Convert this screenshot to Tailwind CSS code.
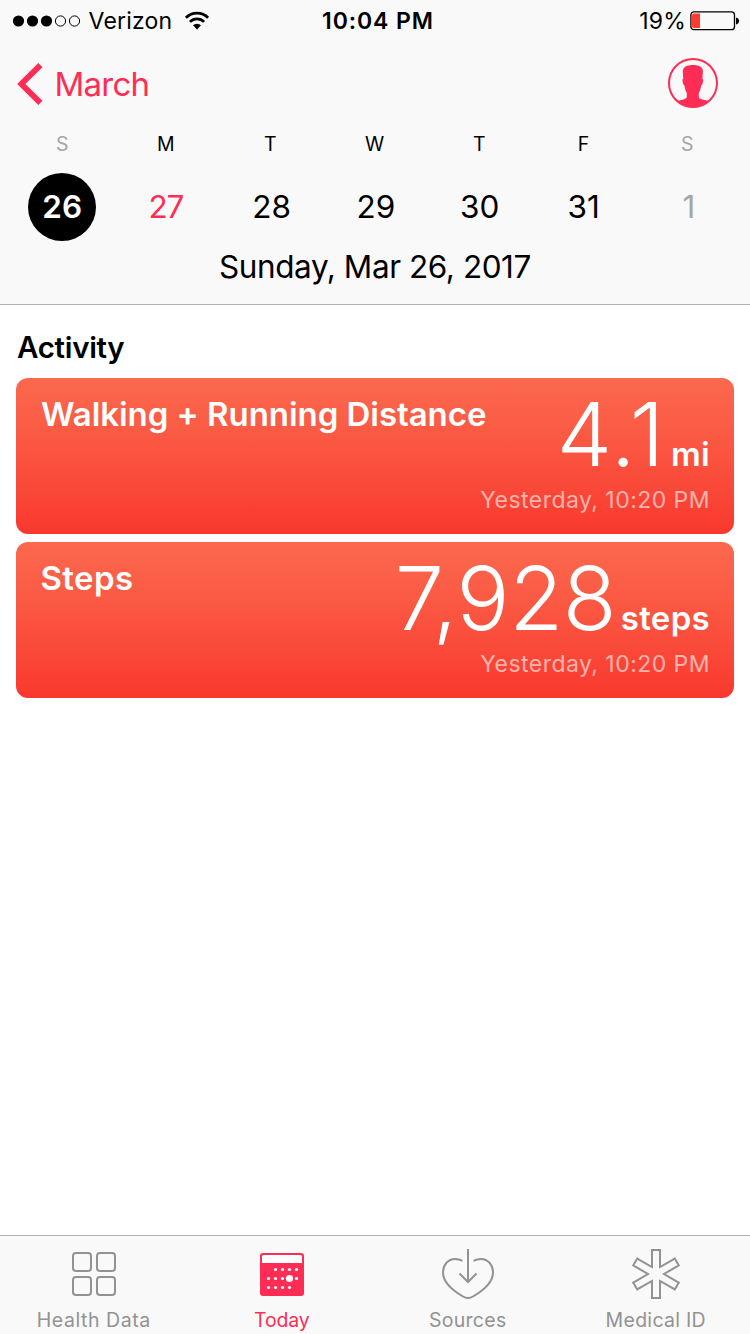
<!DOCTYPE html>
<html lang="en">
<head>
<meta charset="utf-8">
<title>Health</title>
<script src="https://cdn.jsdelivr.net/npm/@tailwindcss/browser@4"></script>
</head>
<body class="w-[750px] h-[1334px] overflow-hidden bg-white text-black font-['Inter','Liberation_Sans',sans-serif] flex flex-col whitespace-nowrap">

<header class="h-[305px] shrink-0 bg-[#f9f9f9] border-b border-[#b2b2b2]">
  <!-- Status bar -->
  <div class="grid grid-cols-3 h-[41px] items-center text-[23px] leading-[41px]">
    <div class="flex items-center pl-[12px]">
      <svg class="w-[70px] h-[14px]" viewBox="0 0 70 14">
        <circle cx="6.5" cy="7" r="5.6"/><circle cx="20.5" cy="7" r="5.6"/><circle cx="34.5" cy="7" r="5.6"/>
        <circle cx="48.5" cy="7" r="5.1" fill="none" stroke="#000" stroke-width="1"/><circle cx="62.5" cy="7" r="5.1" fill="none" stroke="#000" stroke-width="1"/>
      </svg>
      <span class="ml-[6.5px] pt-[2px] leading-[39px] tracking-[0.2px]">Verizon</span>
      <svg class="ml-[11.5px] w-[26px] h-[20px] shrink-0" viewBox="0 0 26 20" fill="none" stroke="#000" stroke-width="2.7">
        <path d="M1.9 6.700a15.6 15.6 0 0 1 22.2 0"/>
        <path d="M5.9 10.900a10 10 0 0 1 14.2 0"/>
        <path d="M13 18.4l-4-4.1a5.8 5.8 0 0 1 8 0z" fill="#000" stroke="none"/>
      </svg>
    </div>
    <div class="text-center font-[590] tracking-[0.9px] pl-[6px] pt-[2px] leading-[39px]">10:04 PM</div>
    <div class="flex items-center justify-end pr-[10px]">
      <span class="tracking-[0.2px] mr-[4px] pt-[2px] leading-[39px]">19%</span>
      <svg class="w-[50px] h-[20px]" viewBox="0 0 50 20">
        <rect x="0.9" y="0.9" width="43.6" height="17.8" rx="3" fill="none" stroke="#000" stroke-width="1.3"/>
        <path d="M4 2.5h6v14.5H4a2 2 0 0 1-2-2V4.500a2 2 0 0 1 2-2z" fill="#ff3b30"/>
        <path d="M46 6.500q3 .6 3 3.500t-3 3.500z"/>
      </svg>
    </div>
  </div>

  <!-- Navigation -->
  <div class="flex justify-between items-center h-[86px] pl-[15.500px] pr-[31px]">
    <div class="flex items-center text-[#ff2d55]">
      <svg class="w-[28px] h-[44px]" viewBox="0 0 28 44" fill="none" stroke="currentColor" stroke-width="5.800"><path d="M24.400 3.100L5.300 22l19.100 18.900"/></svg>
      <span class="ml-[11px] text-[33px] leading-[40px] tracking-[-0.77px]">March</span>
    </div>
    <svg class="w-[52px] h-[52px] -mt-[2px]" viewBox="0 0 52 52">
      <clipPath id="ring"><circle cx="26" cy="26" r="24.500"/></clipPath>
      <path clip-path="url(#ring)" fill="#ff2d55" d="M26 8c-6.200 0-10.200 2-10.200 6.500l.4 7.500c-.9 0-.9 1.500-.4 3.500.4 1.800.8 2.700 1.600 2.900.5 3.200 1.200 5.600 2.400 7.600v4c0 1.500-2.500 2.400-5.700 2.900C12 43.300 9 44 5 47v6h42v-6c-4-3-7-3.700-9.500-4.100-3.200-.5-5.700-1.400-5.700-2.900v-4c1.200-2 1.900-4.400 2.400-7.600.8-.2 1.200-1.100 1.600-2.900.5-2 .5-3.500-.4-3.500l.5-7.500C36.200 10.200 32 8 26 8z"/>
      <circle cx="26" cy="26" r="24" fill="none" stroke="#ff2d55" stroke-width="2"/>
    </svg>
  </div>

  <!-- Week -->
  <div class="grid grid-cols-7 px-[10px] text-center text-[19.500px] leading-[34px]">
    <div class="text-[#a5a5a5]">S</div><div class="pr-px">M</div><div class="pr-px">T</div><div class="pr-px">W</div><div>T</div><div>F</div><div class="text-[#a5a5a5] pr-px">S</div>
  </div>
  <div class="grid grid-cols-7 px-[10px] mt-[12px] text-center text-[31.500px] leading-[68px]">
    <div class="size-[68px] justify-self-center rounded-full bg-black text-white font-[590]">26</div>
    <div class="text-[#ff2d55] tracking-[-1px] pr-px">27</div><div class="pl-[2px]">28</div><div class="pl-[2px]">29</div><div class="pl-px">30</div><div>31</div><div class="text-[#a5a5a5] pl-[2px]">1</div>
  </div>
  <div class="text-center text-[31.500px] leading-[52px] tracking-[-0.43px]">Sunday, Mar 26, 2017</div>
</header>

<main class="flex-1 px-[16px] pt-[22px]">
  <h2 class="text-[29.500px] leading-[41px] font-[590] tracking-[-0.3px] pl-[1px] mb-[10px]">Activity</h2>
  <div class="flex flex-col gap-2">
    <section class="h-[156px] rounded-[12px] bg-linear-to-b from-[#fb694e] to-[#f9372e] text-white flex justify-between pl-[25px] pr-[24px]">
      <h3 class="w-0 pt-4 text-[33px] leading-[40px] font-[590] tracking-[-0.05px]">Walking + Running Distance</h3>
      <div class="flex flex-col items-end pt-3">
        <div class="flex items-baseline h-[88px]">
          <span class="text-[88px] leading-[88px] font-light tracking-[1.700px]">4.1</span>
          <span class="ml-[5px] text-[33px] leading-[40px] font-[590] tracking-[0.29px]">mi</span>
        </div>
        <div class="text-[23px] leading-[45px] tracking-[0.46px] text-white/60">Yesterday, 10:20 PM</div>
      </div>
    </section>
    <section class="h-[156px] rounded-[12px] bg-linear-to-b from-[#fb694e] to-[#f9372e] text-white flex justify-between pl-[24.500px] pr-[24px]">
      <h3 class="w-0 pt-4 text-[33px] leading-[40px] font-[590] tracking-[0.400px]">Steps</h3>
      <div class="flex flex-col items-end pt-3">
        <div class="flex items-baseline h-[88px]">
          <span class="text-[88px] leading-[88px] font-light tracking-[-0.36px]">7,928</span>
          <span class="ml-[4.500px] text-[33px] leading-[40px] font-[590] tracking-[0.3px]">steps</span>
        </div>
        <div class="text-[23px] leading-[45px] tracking-[0.46px] text-white/60">Yesterday, 10:20 PM</div>
      </div>
    </section>
  </div>
</main>

<nav class="h-[99px] shrink-0 bg-[#f9f9f9] border-t border-[#b2b2b2] grid grid-cols-4 text-[19.500px] leading-[24px] text-[#929292]">
  <div class="flex flex-col items-center pt-3">
    <svg class="w-[52px] h-[52px]" viewBox="0 0 52 52" fill="none" stroke="currentColor" stroke-width="2">
      <rect x="5" y="5" width="18" height="18" rx="3"/><rect x="29" y="5" width="18" height="18" rx="3"/>
      <rect x="5" y="29" width="18" height="18" rx="3"/><rect x="29" y="29" width="18" height="18" rx="3"/>
    </svg>
    <span class="mt-2 tracking-[0.56px]">Health Data</span>
  </div>
  <div class="flex flex-col items-center pt-3 pl-px text-[#ff2d55]">
    <svg class="w-[52px] h-[52px]" viewBox="0 0 52 52" fill="#fff">
      <rect x="4" y="5" width="44" height="43" rx="3" fill="currentColor"/>
      <path d="M6 15V8.500Q6 7 7.500 7h37Q46 7 46 8.500V15z"/>
      <circle cx="19.500" cy="21.500" r="1.600"/><circle cx="26.500" cy="21.500" r="1.600"/><circle cx="33.500" cy="21.500" r="1.600"/><circle cx="40.500" cy="21.500" r="1.600"/>
      <circle cx="12.500" cy="30.500" r="1.600"/><circle cx="19.500" cy="30.500" r="1.600"/><circle cx="26.500" cy="30.500" r="1.600"/><circle cx="33.500" cy="30.500" r="3.600"/><circle cx="40.500" cy="30.500" r="1.600"/>
      <circle cx="12.500" cy="39.500" r="1.600"/><circle cx="19.500" cy="39.500" r="1.600"/><circle cx="26.500" cy="39.500" r="1.600"/><circle cx="33.500" cy="39.500" r="1.600"/>
    </svg>
    <span class="mt-2 tracking-[-0.2px]">Today</span>
  </div>
  <div class="flex flex-col items-center pt-3 pr-[2px]">
    <svg class="w-[54px] h-[52px]" viewBox="0 0 54 52" fill="none" stroke="currentColor" stroke-width="2">
      <path d="M27 1v33M18.500 25.500L27 34l8.500-8.500"/>
      <path d="M21.500 13C19 11.500 16.500 11 14 11 7 11 2 17 2 24.500 2 34.500 12.500 43 22 48.500c3.500 2 6.500 2 10 0C41.500 43 52 34.500 52 24.500 52 17 47 11 40 11c-2.500 0-5 .5-7.500 2"/>
    </svg>
    <span class="mt-2 tracking-[0.29px]">Sources</span>
  </div>
  <div class="flex flex-col items-center pt-3 pr-px">
    <svg class="w-[52px] h-[52px]" viewBox="0 0 52 52" fill="none" stroke="currentColor" stroke-width="2">
      <path d="M22 2h8v17.070l14.780-8.530 4 6.920L34 26l14.780 8.540-4 6.920L30 32.930V50h-8V32.930L7.220 41.460l-4-6.920L18 26 3.220 17.460l4-6.920L22 19.070z"/>
    </svg>
    <span class="mt-2 tracking-[0.29px]">Medical ID</span>
  </div>
</nav>
</body>
</html>
